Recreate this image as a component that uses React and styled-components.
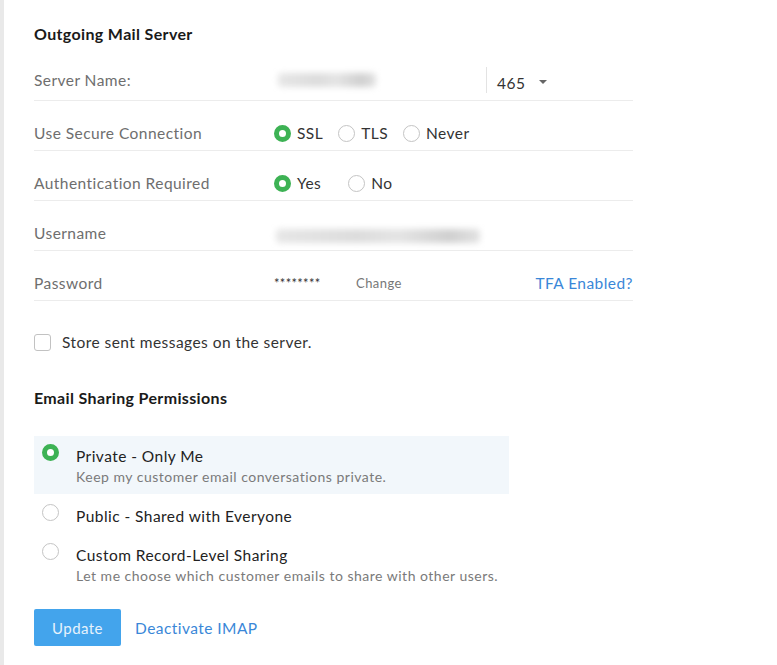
import React from "react";
import styled, { createGlobalStyle, css } from "styled-components";

const GlobalStyle = createGlobalStyle`
  html, body {
    margin: 0;
    padding: 0;
    background: #ffffff;
  }
  body {
    font-family: Lato, "Open Sans", Arial, sans-serif;
    letter-spacing: 0.45px;
    color: #333;
  }
`;

const Page = styled.div`
  width: 777px;
  height: 665px;
  box-sizing: border-box;
  border-left: 4px solid #e9e9e9;
  padding: 22px 0 0 30px;
  overflow: hidden;
`;

const Section = styled.div`
  width: 599px;
  display: flex;
  flex-direction: column;
`;

const Heading = styled.h2`
  margin: 0;
  font-size: 16px;
  font-weight: 700;
  letter-spacing: 0.35px;
  color: #1a1a1a;
  line-height: 24px;
  margin-top: ${(p) => p.$top || 0}px;
  margin-bottom: ${(p) => p.$bottom || 0}px;
`;

const Row = styled.div`
  display: flex;
  align-items: ${(p) => (p.$center ? "center" : "flex-end")};
  height: 50px;
  box-sizing: border-box;
  padding-bottom: ${(p) => (p.$center ? 0 : 7)}px;
  padding-top: ${(p) => (p.$center ? 8 : 0)}px;
  border-bottom: 1px solid #ececec;
  font-size: 15.5px;
`;

const Label = styled.div`
  width: 240px;
  flex: none;
  color: #6e6e6e;
  line-height: 20px;
`;

const Value = styled.div`
  flex: 1;
  display: flex;
  align-items: center;
  line-height: 20px;
  color: #333;
`;

const Blurred = styled.div`
  width: ${(p) => p.$w}px;
  height: 14px;
  margin-left: ${(p) => p.$left || 0}px;
  background: linear-gradient(90deg, #e6e6e6 0%, #dcdcdc 40%, #e4e4e4 60%, #cfcfcf 85%, #e2e2e2 100%);
  filter: blur(3px);
  border-radius: 4px;
`;

const Port = styled.div`
  margin-left: auto;
  width: 147px;
  height: 26px;
  border-left: 1px solid #e3e3e3;
  display: flex;
  align-items: center;
  padding-left: 10px;
  box-sizing: border-box;
  gap: 14px;
  padding-top: 6px;
`;

const Caret = styled.span`
  width: 0;
  height: 0;
  border-left: 4px solid transparent;
  border-right: 4px solid transparent;
  border-top: 4px solid #666;
  margin-top: -2px;
`;

const Option = styled.label`
  display: inline-flex;
  align-items: center;
  gap: 6px;
  margin-right: ${(p) => p.$gap || 14}px;
  color: #333;
  cursor: pointer;
`;

const RadioDot = styled.span`
  width: 17px;
  height: 17px;
  box-sizing: border-box;
  border-radius: 50%;
  flex: none;
  display: inline-block;
  ${(p) =>
    p.$on
      ? css`
          border: 5px solid #3db254;
          box-shadow: inset 0 0 0 3px #fff;
          background: #fff;
        `
      : css`
          background: #fff;
          border: 1px solid #c4c4c4;
        `}
`;

const Stars = styled.span`
  font-size: 13px;
  letter-spacing: 0.3px;
  width: 82px;
  color: #333;
`;

const Muted = styled.span`
  font-size: 13px;
  color: #777;
`;

const Link = styled.a`
  color: #3a87d8;
  text-decoration: none;
  font-size: 15.5px;
  margin-left: ${(p) => (p.$right ? "auto" : "0")};
  cursor: pointer;
`;

const CheckRow = styled.label`
  display: flex;
  align-items: center;
  gap: 11px;
  margin-top: 32px;
  font-size: 15.5px;
  color: #333;
`;

const Box = styled.span`
  width: 17px;
  height: 17px;
  box-sizing: border-box;
  border: 1px solid #c2c2c2;
  border-radius: 3px;
  background: #fff;
`;

const Perms = styled.div`
  display: flex;
  flex-direction: column;
  width: 475px;
  margin-top: 26px;
`;

const Perm = styled.div`
  display: flex;
  gap: 17px;
  padding: ${(p) => (p.$active ? "8px 8px 7px" : "10px 8px 1px")};
  background: ${(p) => (p.$active ? "#f2f7fb" : "transparent")};
  min-height: ${(p) => (p.$active ? 58 : 39)}px;
  box-sizing: border-box;
`;

const PermText = styled.div`
  display: flex;
  flex-direction: column;
  padding-top: 2px;
`;

const PermTitle = styled.div`
  font-size: 15.5px;
  color: #222;
  line-height: 20px;
`;

const PermDesc = styled.div`
  font-size: 14px;
  letter-spacing: 0.5px;
  color: #7a7a7a;
  line-height: 20px;
  margin-top: 1px;
`;

const Actions = styled.div`
  display: flex;
  align-items: center;
  gap: 14px;
  margin-top: 22px;
`;

const Button = styled.button`
  width: 87px;
  height: 37px;
  border: none;
  border-radius: 2px;
  background: #43a4ec;
  color: #e6f2fc;
  font-family: inherit;
  letter-spacing: inherit;
  font-size: 15px;
  cursor: pointer;
`;

const Radio = ({ on }) => <RadioDot $on={on} />;

export default function App() {
  return (
    <>
      <GlobalStyle />
      <Page>
        <Section>
          <Heading $bottom={5}>Outgoing Mail Server</Heading>
          <Row $center>
            <Label>Server Name:</Label>
            <Value>
              <Blurred $w={98} $left={4} />
              <Port>
                <span>465</span>
                <Caret />
              </Port>
            </Value>
          </Row>
          <Row>
            <Label>Use Secure Connection</Label>
            <Value>
              <Option $gap={15}>
                <Radio on />
                SSL
              </Option>
              <Option $gap={15}>
                <Radio />
                TLS
              </Option>
              <Option>
                <Radio />
                Never
              </Option>
            </Value>
          </Row>
          <Row>
            <Label>Authentication Required</Label>
            <Value>
              <Option $gap={27}>
                <Radio on />
                Yes
              </Option>
              <Option>
                <Radio />
                No
              </Option>
            </Value>
          </Row>
          <Row>
            <Label>Username</Label>
            <Value>
              <Blurred $w={204} $left={2} />
            </Value>
          </Row>
          <Row>
            <Label>Password</Label>
            <Value>
              <Stars>********</Stars>
              <Muted>Change</Muted>
              <Link $right>TFA Enabled?</Link>
            </Value>
          </Row>
          <CheckRow>
            <Box />
            Store sent messages on the server.
          </CheckRow>
          <Heading $top={35}>Email Sharing Permissions</Heading>
          <Perms>
            <Perm $active>
              <Radio on />
              <PermText>
                <PermTitle>Private - Only Me</PermTitle>
                <PermDesc>Keep my customer email conversations private.</PermDesc>
              </PermText>
            </Perm>
            <Perm>
              <Radio />
              <PermText>
                <PermTitle>Public - Shared with Everyone</PermTitle>
              </PermText>
            </Perm>
            <Perm>
              <Radio />
              <PermText>
                <PermTitle>Custom Record-Level Sharing</PermTitle>
                <PermDesc>Let me choose which customer emails to share with other users.</PermDesc>
              </PermText>
            </Perm>
          </Perms>
          <Actions>
            <Button>Update</Button>
            <Link>Deactivate IMAP</Link>
          </Actions>
        </Section>
      </Page>
    </>
  );
}
